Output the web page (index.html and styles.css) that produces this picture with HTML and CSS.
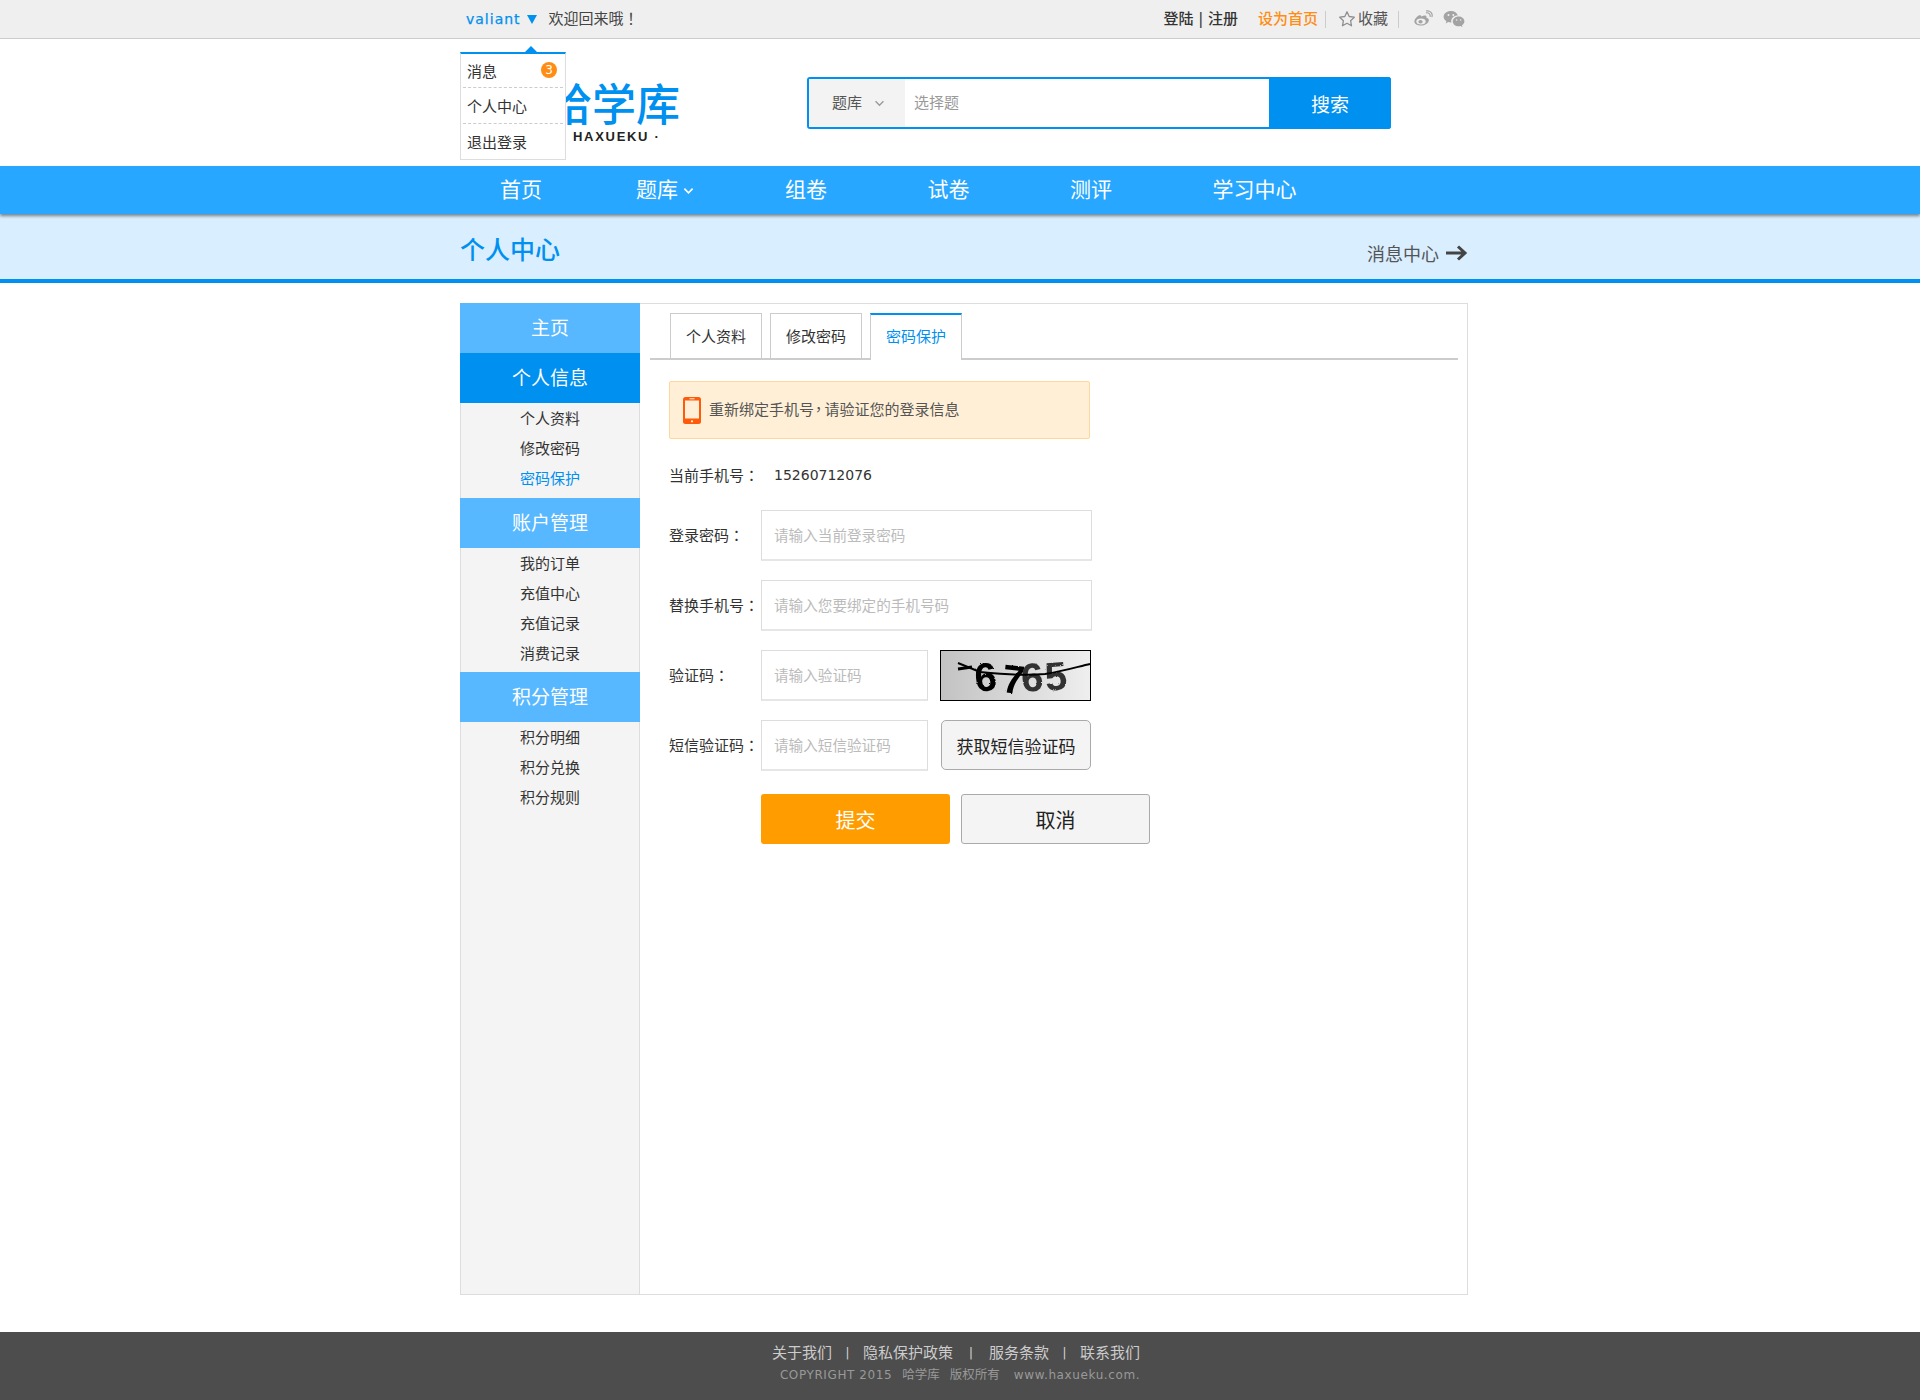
FILE: index.html
```html
<!DOCTYPE html>
<html>
<head>
<meta charset="utf-8">
<title>哈学库 - 个人中心</title>
<link rel="stylesheet" href="styles.css">
</head>
<body>
<div class="topbar">
  <div class="wrap topbar-in">
    <div class="user-area">
      <span class="user-name">valiant</span>
      <span class="user-caret"></span>
      <span class="welcome">欢迎回来哦<span class="punct">！</span></span>
      <div class="user-menu">
        <div class="menu-row menu-row-first"><span>消息</span><span class="menu-badge">3</span></div>
        <div class="menu-row menu-row-second">个人中心</div>
        <div class="menu-row menu-row-last">退出登录</div>
      </div>
    </div>
    <div class="top-links">
      <span class="auth-links">登陆 | 注册</span>
      <span class="home-link">设为首页</span>
      <span class="top-sep"></span>
      <svg class="star-icon" viewBox="0 0 18 18" width="18" height="18"><path d="M9 1.800l2.200 4.700 5.100.7-3.700 3.500.9 5.100L9 13.300l-4.500 2.500.9-5.100L1.700 7.200l5.100-.7z" fill="none" stroke="#8f8f8f" stroke-width="1.300" stroke-linejoin="round"/></svg>
      <span class="fav-link">收藏</span>
      <span class="top-sep top-sep-2"></span>
      <svg class="weibo-icon" viewBox="0 0 20 18" width="20" height="18"><path d="M8.300 6.600c2.900-1.600 4.900-1.500 5.200.1.100.6-.1 1.100-.1 1.100 1.700.4 2.700 1.400 2.400 2.900-.5 2.600-4 4.800-7.900 4.800-3.300 0-6.500-1.400-6.500-4.100 0-1.600 1-3.200 2.700-4.700 1.500-1.300 3-1.700 3.700-1.200.6.400.5 1.200.3 1.800" fill="#a3a3a3"/><ellipse cx="8" cy="11.600" rx="4.700" ry="3" fill="#efefef"/><ellipse cx="7.500" cy="11.800" rx="2.100" ry="1.700" fill="#a3a3a3"/><path d="M13.500 2.800c2-.4 4 1.300 3.600 3.500M13.600.9c3.500-.6 6.300 2.400 5.400 5.800" fill="none" stroke="#a3a3a3" stroke-width="1.200" stroke-linecap="round"/></svg>
      <svg class="wechat-icon" viewBox="0 0 22 18" width="22" height="18"><path d="M8 1C3.800 1 .6 3.600.6 6.800c0 1.900 1.100 3.400 2.800 4.500l-.7 2.100 2.500-1.300c.9.200 1.700.4 2.600.4h.6c-.2-.5-.2-1-.2-1.500 0-3.200 2.800-5.600 6.200-5.600h.5C14.100 2.900 11.400 1 8 1z" fill="#a3a3a3"/><path d="M21.400 11.400c0-2.700-2.700-4.800-5.800-4.800-3.300 0-5.800 2.200-5.800 4.800s2.500 4.800 5.800 4.800c.7 0 1.400-.1 2-.3l1.900 1-.5-1.700c1.400-.9 2.400-2.300 2.400-3.800z" fill="#a3a3a3"/><circle cx="5.500" cy="5" r="1" fill="#efefef"/><circle cx="10.300" cy="5" r="1" fill="#efefef"/><circle cx="13.600" cy="10" r=".8" fill="#efefef"/><circle cx="17.600" cy="10" r=".8" fill="#efefef"/></svg>
    </div>
  </div>
</div>

<header class="site-header">
  <div class="wrap header-in">
    <div class="logo">
      <div class="logo-cn">哈学库</div>
      <div class="logo-en">HAXUEKU ·</div>
    </div>
    <form class="search">
      <div class="search-type">
        <span class="search-type-text">题库</span>
        <svg viewBox="0 0 12 8" width="11" height="7"><path d="M1.500 1.500L6 6l4.500-4.500" fill="none" stroke="#999" stroke-width="1.500"/></svg>
      </div>
      <input class="search-input" type="text" placeholder="选择题">
      <button class="search-btn" type="button">搜索</button>
    </form>
  </div>
</header>

<nav class="main-nav">
  <div class="wrap nav-in">
    <a class="nav-item nav-item-first">首页</a>
    <a class="nav-item nav-item-more">题库<svg viewBox="0 0 12 8" width="11" height="8"><path d="M1.500 1.500L6 6l4.500-4.500" fill="none" stroke="#fff" stroke-width="1.800"/></svg></a>
    <a class="nav-item">组卷</a>
    <a class="nav-item">试卷</a>
    <a class="nav-item">测评</a>
    <a class="nav-item">学习中心</a>
  </div>
</nav>

<div class="sub-band">
  <div class="wrap sub-in">
    <h1 class="sub-title">个人中心</h1>
    <a class="msg-link">消息中心<svg viewBox="0 0 23 18" width="23" height="18"><path d="M1 9h19M13 2.500L20 9l-7 6.500" fill="none" stroke="#444" stroke-width="3"/></svg></a>
  </div>
</div>

<div class="wrap content">
  <aside class="sidebar">
    <div class="side-head">主页</div>
    <div class="side-head side-head-active">个人信息</div>
    <ul class="side-list">
      <li>个人资料</li>
      <li>修改密码</li>
      <li class="side-current">密码保护</li>
    </ul>
    <div class="side-head">账户管理</div>
    <ul class="side-list side-list-tight">
      <li>我的订单</li>
      <li>充值中心</li>
      <li>充值记录</li>
      <li>消费记录</li>
    </ul>
    <div class="side-head">积分管理</div>
    <ul class="side-list">
      <li>积分明细</li>
      <li>积分兑换</li>
      <li>积分规则</li>
    </ul>
  </aside>

  <main class="panel">
    <div class="tabs">
      <a class="tab">个人资料</a>
      <a class="tab">修改密码</a>
      <a class="tab tab-active">密码保护</a>
    </div>
    <div class="panel-body">
      <div class="notice">
        <svg class="notice-icon" viewBox="0 0 18 27" width="18" height="27"><rect x="0" y="0" width="18" height="27" rx="2.500" fill="#ff5a0a"/><rect x="2" y="3.500" width="14" height="18" fill="#ffefd6"/><rect x="6.500" y="1.300" width="5" height="1" fill="#ffefd6"/><circle cx="9" cy="24.300" r="1.100" fill="#ffefd6"/></svg>
        <span class="notice-text">重新绑定手机号<span class="punct punct-comma">，</span>请验证您的登录信息</span>
      </div>
      <div class="row-current">
        <span class="label">当前手机号<span class="punct">：</span></span>
        <span class="phone">15260712076</span>
      </div>
      <div class="field">
        <label class="label">登录密码<span class="punct">：</span></label>
        <input class="input input-long" type="text" placeholder="请输入当前登录密码">
      </div>
      <div class="field">
        <label class="label">替换手机号<span class="punct">：</span></label>
        <input class="input input-long" type="text" placeholder="请输入您要绑定的手机号码">
      </div>
      <div class="field">
        <label class="label">验证码<span class="punct">：</span></label>
        <input class="input input-short" type="text" placeholder="请输入验证码">
        <svg class="captcha" viewBox="0 0 151 51" width="151" height="51">
          <defs>
            <linearGradient id="capbg" x1="0" x2="1" y1="0" y2="0"><stop offset="0" stop-color="#c2c2c2"/><stop offset="1" stop-color="#efefef"/></linearGradient>
            <filter id="caprough" x="-10%" y="-20%" width="120%" height="140%"><feTurbulence type="fractalNoise" baseFrequency="0.9" numOctaves="1" seed="4"/><feDisplacementMap in="SourceGraphic" scale="2.500"/></filter>
          </defs>
          <rect x="0" y="0" width="151" height="51" fill="url(#capbg)"/>
          <rect x=".5" y=".5" width="150" height="50" fill="none" stroke="#000"/>
          <g class="captcha-digits" filter="url(#caprough)">
            <text class="cap-a" x="36" y="42" rotate="-6">6</text>
            <text class="cap-b" x="61" y="42" rotate="6">7</text>
            <text class="cap-c" x="82" y="42" rotate="-4">6</text>
            <text class="cap-d" x="106" y="41" rotate="-5">5</text>
          </g>
          <path d="M18 13L40 22C70 25 95 25 105 24 125 21 140 16 150 14" fill="none" stroke="#000" stroke-width="2"/>
          <path d="M18 19L32 17" fill="none" stroke="#000" stroke-width="3"/>
        </svg>
      </div>
      <div class="field">
        <label class="label">短信验证码<span class="punct">：</span></label>
        <input class="input input-short" type="text" placeholder="请输入短信验证码">
        <button class="sms-btn" type="button">获取短信验证码</button>
      </div>
      <div class="actions">
        <button class="btn btn-submit" type="button">提交</button>
        <button class="btn btn-cancel" type="button">取消</button>
      </div>
    </div>
  </main>
</div>

<footer class="site-footer">
  <div class="foot-links">
    <span>关于我们</span><i class="foot-sep foot-sep-a">|</i><span>隐私保护政策</span><i class="foot-sep foot-sep-b">|</i><span>服务条款</span><i class="foot-sep foot-sep-c">|</i><span>联系我们</span>
  </div>
  <div class="foot-copy">
    <span class="copy-en">COPYRIGHT 2015</span><span class="copy-cn">哈学库</span><span class="copy-cn">版权所有</span><span class="copy-en copy-url">www.haxueku.com.</span>
  </div>
</footer>
</body>
</html>
```
FILE: styles.css
```css
* { box-sizing: border-box; }
html, body { margin: 0; padding: 0; }
body {
  font-family: "DejaVu Sans", "Noto Sans CJK SC", sans-serif;
  font-size: 15px;
  color: #333;
  background: #fff;
}
.wrap { width: 1016px; padding-left: 8px; margin: 0 auto; }
.punct { font-family: "Noto Sans CJK TC", sans-serif; }
.punct-comma { margin: 0 -1.500px 0 -3px; }
ul { list-style: none; margin: 0; padding: 0; }
button, input { font-family: inherit; }

/* top bar */
.topbar { height: 39px; background: #efefef; border-bottom: 1px solid #ccc; }
.topbar-in { height: 38px; display: flex; justify-content: space-between; align-items: center; }
.user-area { position: relative; display: flex; align-items: center; padding-left: 6px; }
.user-name { font-size: 14px; letter-spacing: 1px; color: #0090f0; -webkit-text-stroke: .25px #0090f0; }
.user-caret {
  width: 0; height: 0; margin-left: 6px;
  border-left: 5.500px solid transparent;
  border-right: 5.500px solid transparent;
  border-top: 9px solid #0090f0;
}
.welcome { margin-left: 12px; color: #444; font-size: 15px; margin-bottom: 4px; }
.user-menu {
  position: absolute; left: 0; top: 45px; width: 106px; height: 108px;
  background: #fff; border: 1px solid #ddd; border-top: 2px solid #0090f0; z-index: 5;
  padding: 0 2px;
}
.user-menu::before {
  content: ""; position: absolute; left: 64px; top: -8px; width: 0; height: 0;
  border-left: 6px solid transparent; border-right: 6px solid transparent;
  border-bottom: 6px solid #0090f0;
}
.menu-row { padding-left: 4px; padding-right: 7px; display: flex; align-items: center; justify-content: space-between; color: #333; font-size: 15px; }
.menu-row-first { height: 34px; border-bottom: 1px dashed #ccc; }
.menu-row-second { height: 36px; border-bottom: 1px dashed #ccc; }
.menu-row-last { height: 36px; }
.menu-badge {
  width: 16px; height: 16px; border-radius: 50%; background: #ff8d14; color: #fff;
  font-size: 12px; display: flex; align-items: center; justify-content: center;
  margin-right: -1px;
}
.top-links { display: flex; align-items: center; font-size: 15px; }
.top-links span { margin-bottom: 4px; }
.top-links .top-sep { margin-bottom: 0; }
.top-links svg { margin-bottom: 1px; }
.auth-links { color: #333; font-weight: 500; }
.home-link { margin-left: 20px; color: #ff8d14; font-weight: 500; }
.top-sep { width: 1px; height: 17px; background: #ccc; margin-left: 7px; }
.star-icon { margin-left: 12px; }
.fav-link { margin-left: 2px; color: #555; }
.top-sep-2 { margin-left: 10px; }
.weibo-icon { margin-left: 14px; }
.wechat-icon { margin-left: 10px; margin-right: 3px; }

/* header */
.site-header { height: 127px; }
.header-in { height: 127px; display: flex; }
.logo { margin-left: 88px; padding-top: 39px; width: 259px; flex: none; }
.logo-cn { font-size: 44px; line-height: 56px; height: 56px; color: #0090f0; font-weight: 500; white-space: nowrap; }
.logo-en { margin-left: 25px; margin-top: -5px; font-size: 13px; line-height: 16px; color: #222; font-family: "Liberation Sans", sans-serif; font-weight: 700; letter-spacing: 1.700px; }
.search {
  margin-top: 38px; width: 584px; height: 52px; display: flex;
  border: 2px solid #0090f0; border-radius: 3px;
}
.search-type {
  width: 96px; background: #f3f3f3; display: flex; align-items: center;
  padding-left: 23px; gap: 12px; font-size: 15px; color: #555;
}
.search-type-text { margin-bottom: 3px; }
.search-input {
  flex: 1; min-width: 0; border: 0; outline: 0; padding: 0 9px; font-size: 15px; background: #fff;
}
.search-input::placeholder { color: #999; opacity: 1; }
.search-btn {
  width: 122px; margin: -2px -2px -2px 0; border: 0; background: #0090f0; color: #fff;
  font-size: 19px; border-radius: 0 3px 3px 0; padding: 0;
}

/* nav */
.main-nav { height: 48px; background: #27a7ff; box-shadow: 0 2px 3px rgba(60,70,80,.65); position: relative; }
.nav-in { height: 48px; display: flex; align-items: center; }
.nav-item { margin-right: 100.500px; color: #fff; font-size: 21px; line-height: 46px; display: flex; align-items: center; }
.nav-item-first { margin-left: 40px; margin-right: 94px; }
.nav-item-more { margin-right: 91px; }
.nav-item-more svg { margin-left: 5px; margin-top: 1px; }

/* band */
.sub-band { height: 69px; background: #d9eeff; border-bottom: 4px solid #0090f0; }
.sub-in { height: 65px; display: flex; justify-content: space-between; }
.sub-title { margin: 19px 0 0; font-size: 25px; line-height: 36px; font-weight: 500; color: #0090f0; }
.msg-link { margin-top: 25px; height: 28px; display: flex; align-items: center; font-size: 18px; color: #555; gap: 6px; }

/* content */
.content { margin-top: 20px; margin-bottom: 37px; height: 992px; display: flex; }
.sidebar {
  width: 180px; flex: none; background: #f4f4f4;
  border-left: 1px solid #ddd; border-right: 1px solid #ddd; border-bottom: 1px solid #ddd;
}
.side-head {
  margin: 0 -1px; height: 50px; line-height: 50px; text-align: center;
  background: #58b8ff; color: #fff; font-size: 19px;
}
.side-head-active { background: #0090f0; }
.side-list { padding: 1px 0 4px; }
.side-list-tight { padding-bottom: 3px; }
.side-list li { height: 30px; line-height: 30px; text-align: center; font-size: 15px; color: #333; }
.side-list .side-current { color: #0090f0; }

.panel { flex: 1; border: 1px solid #ddd; border-left: 0; }
.tabs {
  margin: 9px 9px 0 10px; height: 47px; padding-left: 20px; display: flex; gap: 8px;
  border-bottom: 2px solid #ccc;
}
.tab {
  width: 92px; height: 47px; border: 1px solid #ccc; border-bottom: 0;
  text-align: center; line-height: 46px; font-size: 15px; color: #333; background: #fff;
  margin-bottom: -2px;
}
.tab:not(.tab-active) { height: 45px; }
.tab-active { border-top: 2px solid #0090f0; color: #0090f0; line-height: 44px; }
.panel-body { padding: 21px 0 0 29px; }
.notice {
  width: 421px; height: 58px; background: #ffefd6; border: 1px solid #ffd79b;
  border-radius: 2px; display: flex; align-items: center; padding-left: 13px; color: #555; font-size: 15px; gap: 8px;
}
.notice-text { margin-bottom: 4px; }
.row-current { margin-top: 26px; height: 20px; line-height: 20px; display: flex; margin-bottom: 25px; }
.label { width: 92px; flex: none; color: #333; font-size: 15px; white-space: nowrap; }
.field .label { margin-bottom: 2px; }
.phone { padding-left: 13px; font-size: 14px; color: #333; }
.field { display: flex; align-items: center; height: 51px; margin-bottom: 19px; }
.input {
  height: 51px; border: 1px solid #ddd; border-bottom: 2px solid #e6e6e6; outline: 0; padding: 0 12px;
  font-size: 14.600px; color: #333; background: #fff;
}
.input::placeholder { color: #bbb; opacity: 1; }
.input-long { width: 331px; }
.input-short { width: 167px; }
.captcha { margin-left: 12px; margin-top: -1px; display: block; }
.captcha-digits { font-family: "Liberation Sans", sans-serif; font-weight: 700; font-size: 40px; fill: #000; }
.cap-c, .cap-d { fill: #333; }
.sms-btn {
  margin-left: 13px; width: 150px; height: 50px; margin-top: -1px; background: #f4f4f4;
  border: 1px solid #aaa; border-radius: 5px; font-size: 17px; color: #222; padding: 0;
}
.actions { display: flex; gap: 11px; margin-left: 92px; margin-top: 23px; }
.btn { width: 189px; height: 50px; border-radius: 3px; font-size: 20px; padding: 0; }
.btn-submit { background: #ff9d00; border: 0; color: #fff; }
.btn-cancel { background: #f4f4f4; border: 1px solid #aaa; color: #222; }

/* footer */
.site-footer { height: 68px; background: #4d4d4d; text-align: center; overflow: hidden; padding-right: 8px; }
.foot-links { padding-top: 10px; height: 32px; line-height: 22px; font-size: 15px; color: #ccc; display: flex; justify-content: center; }
.foot-sep { font-style: normal; width: 31px; text-align: center; font-size: 13px; }
.foot-sep-b { width: 36px; }
.foot-sep-c { width: 31px; }
.foot-copy { display: flex; justify-content: center; height: 22px; line-height: 22px; color: #999; font-size: 13px; padding-left: 8px; }
.copy-en { font-size: 12px; letter-spacing: .6px; }
.copy-cn { margin-left: 10px; font-size: 12.500px; }
.copy-url { margin-left: 14px; }
```
